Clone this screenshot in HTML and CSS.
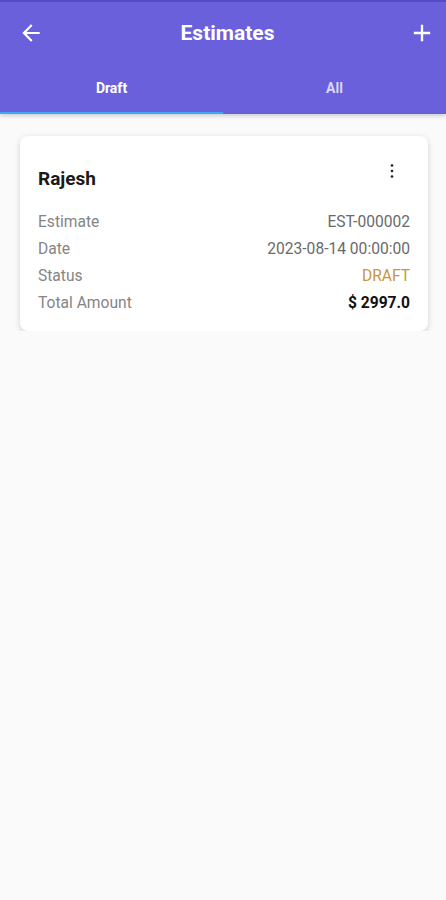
FILE: index.html
```html
<!DOCTYPE html>
<html lang="en">
  <head>
    <meta charset="UTF-8" />
    <meta name="viewport" content="width=device-width, initial-scale=1.0" />
    <title>Estimates</title>
    <link rel="stylesheet" href="styles.css">
  </head>
  <body>
    <div class="header">
      <div class="status-strip"></div>
      <div class="toolbar">
        <svg class="back-icon" viewBox="0 0 24 24" width="26" height="26">
          <path d="M20 11H7.83l5.59-5.59L12 4l-8 8 8 8 1.41-1.41L7.83 13H20v-2z" fill="#fff" />
        </svg>
        <div class="title">Estimates</div>
        <svg class="add-icon" viewBox="0 0 24 24" width="28" height="28">
          <path d="M19 13h-6v6h-2v-6H5v-2h6V5h2v6h6v2z" fill="#fff" />
        </svg>
      </div>
      <div class="tabs">
        <div class="tab active">Draft</div>
        <div class="tab">All</div>
      </div>
    </div>

    <div class="list">
      <div class="card">
        <div class="card-head">
          <div class="customer">Rajesh</div>
          <svg class="more-icon" viewBox="0 0 16 16" width="16" height="16">
            <circle cx="8" cy="2.5" r="1.35" fill="#222" />
            <circle cx="8" cy="8" r="1.35" fill="#222" />
            <circle cx="8" cy="13.5" r="1.35" fill="#222" />
          </svg>
        </div>
        <div class="rows">
          <div class="row">
            <span class="label">Estimate</span>
            <span class="value">EST-000002</span>
          </div>
          <div class="row">
            <span class="label">Date</span>
            <span class="value">2023-08-14 00:00:00</span>
          </div>
          <div class="row">
            <span class="label">Status</span>
            <span class="value status">DRAFT</span>
          </div>
          <div class="row">
            <span class="label">Total Amount</span>
            <span class="value total">$ 2997.0</span>
          </div>
        </div>
      </div>
    </div>
  </body>
</html>
```

FILE: styles.css
```css
body {
  font-family: Roboto, "Liberation Sans", Arial, sans-serif;
  background-color: #fafafa;
  margin: 0;
}

.header {
  background-color: #6a60dc;
  box-shadow: 0 2px 4px rgba(0, 0, 0, 0.18);
}

.status-strip {
  height: 2px;
  background-color: #5549c4;
}

.toolbar {
  height: 62px;
  display: flex;
  align-items: center;
  padding: 0 10px 0 18px;
}

.back-icon,
.add-icon {
  flex-shrink: 0;
}

.title {
  flex: 1;
  text-align: center;
  padding-left: 3px;
  color: #fff;
  font-size: 21px;
  font-weight: 700;
}

.tabs {
  display: flex;
  height: 50px;
}

.tab {
  flex: 1;
  display: flex;
  align-items: center;
  justify-content: center;
  color: rgba(255, 255, 255, 0.75);
  font-size: 14px;
  font-weight: 700;
  border-bottom: 2px solid transparent;
  box-sizing: border-box;
}

.tab.active {
  color: #fff;
  border-bottom-color: #42a5f5;
}

.list {
  padding: 22px 18px 0 20px;
}

.card {
  background-color: #fff;
  border-radius: 8px;
  box-shadow: 0 2px 6px rgba(0, 0, 0, 0.16);
  padding: 28px 18px 14px 18px;
}

.card-head {
  display: flex;
  justify-content: space-between;
  align-items: flex-start;
}

.customer {
  margin-top: 3px;
  font-size: 19px;
  line-height: 24px;
  font-weight: 700;
  color: #1a1a1a;
}

.more-icon {
  margin-right: 10px;
  margin-top: -1px;
}

.rows {
  margin-top: 18px;
}

.row {
  display: flex;
  justify-content: space-between;
  font-size: 15.6px;
  line-height: 27px;
}

.label {
  color: #858585;
}

.value {
  color: #6a6a6a;
}

.value.status {
  color: #c9963c;
}

.value.total {
  color: #111;
  font-weight: 700;
}
```
